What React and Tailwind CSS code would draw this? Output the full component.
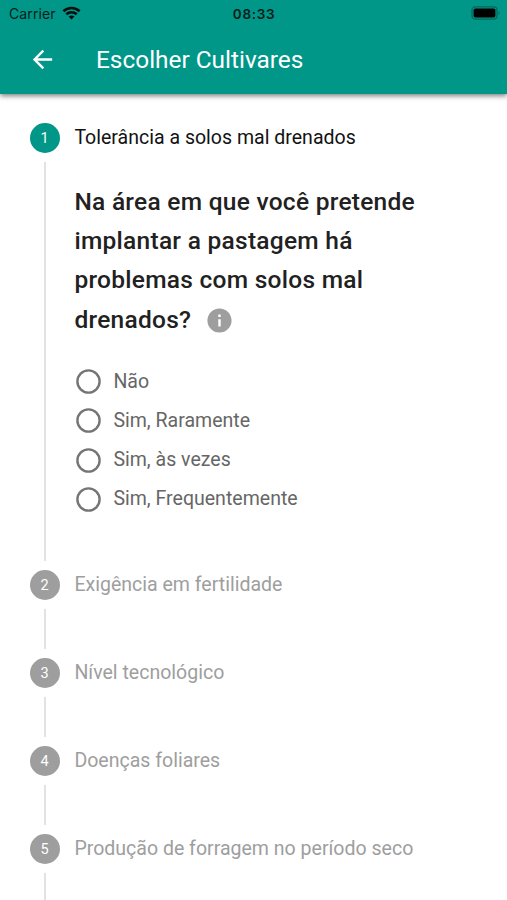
import React from "react";

const options = ["Não", "Sim, Raramente", "Sim, às vezes", "Sim, Frequentemente"];

const nextSteps = [
  "Exigência em fertilidade",
  "Nível tecnológico",
  "Doenças foliares",
  "Produção de forragem no período seco",
];

function StatusBar() {
  return (
    <div className="grid h-[27px] grid-cols-3 items-center font-[Inter,sans-serif] text-[13.5px] text-[#061c19]">
      <div className="flex items-center gap-[6px] pl-[9px] tracking-[0.1px]">
        <span className="text-[14px]">Carrier</span>
        <svg className="-mt-[2px]" width="19" height="14" viewBox="0 0 19 14" fill="none" stroke="#050f0e" strokeWidth="2.6">
          <path d="M1.4 5.2C6 .9 13 .9 17.6 5.2" />
          <path d="M4.3 8.3C7.3 5.6 11.7 5.6 14.7 8.3" />
          <path d="M9.5 13.6L6.6 10.6C8.2 9.2 10.8 9.2 12.4 10.6Z" fill="#050f0e" stroke="none" />
        </svg>
      </div>
      <div className="pt-px pl-px text-center font-semibold tracking-[0.65px]">08:33</div>
      <div className="-mt-px flex justify-end pr-[6px]">
        <svg width="30" height="14" viewBox="0 0 30 14">
          <rect x="1" y="0.9" width="25" height="12.2" rx="3.4" fill="none" stroke="#04665b" strokeWidth="1.3" />
          <rect x="2.6" y="2.5" width="21.8" height="9" rx="1.8" fill="#000" />
          <path d="M27.6 5.2C29 5.6 29 8.4 27.6 8.8Z" fill="#04665b" />
        </svg>
      </div>
    </div>
  );
}

function Step({ number, title, active, children }) {
  return (
    <li className="flex">
      <div className="flex w-[30px] shrink-0 flex-col items-center">
        <span
          className={`flex h-[29.5px] w-[29.5px] shrink-0 items-center justify-center rounded-full pt-[2px] pr-px text-[14.5px] text-white ${
            active ? "bg-[#009688]" : "bg-[#9e9e9e]"
          }`}
        >
          {number}
        </span>
        <span className="my-[9.5px] min-h-[39.5px] w-[1.5px] grow bg-[#e2e2e2]" />
      </div>
      <div className="ml-[14.4px] grow">
        <div
          className={`flex h-[29px] items-center text-[19.55px] whitespace-nowrap ${
            active ? "text-[#121212]" : "text-[#9e9e9e]"
          }`}
        >
          {title}
        </div>
        {children}
      </div>
    </li>
  );
}

export default function App() {
  return (
    <div className="h-[900px] w-[507px] overflow-hidden bg-white font-[Roboto,sans-serif]">
      <header className="relative h-[94px] bg-[#009688] shadow-[0_2px_5px_rgba(0,0,0,0.5)]">
        <StatusBar />
        <div className="flex h-[66px] items-center pl-[28px] text-white">
          <svg className="-mt-px" width="29" height="29" viewBox="0 0 24 24" fill="currentColor">
            <path d="M20 11H7.83l5.59-5.59L12 4l-8 8 8 8 1.41-1.41L7.83 13H20v-2z" />
          </svg>
          <h1 className="ml-[39px] text-[24.4px] whitespace-nowrap">Escolher Cultivares</h1>
        </div>
      </header>
      <main className="pt-[29px] pl-[30px]">
        <ol>
          <Step number={1} title="Tolerância a solos mal drenados" active>
            <div className="h-[418px]">
              <h2 className="w-[370px] pt-[30px] text-[24.5px] leading-[39.2px] font-medium tracking-[0.27px] text-[#212121]">
                Na área em que você pretende implantar a pastagem há problemas com solos mal{" "}
                <span className="inline-flex items-center">
                  drenados?
                  <svg className="mt-[3px] ml-[14px]" width="29" height="29" viewBox="0 0 24 24" fill="#9e9e9e">
                    <path d="M12 2C6.48 2 2 6.48 2 12s4.48 10 10 10 10-4.48 10-10S17.52 2 12 2zm1 15h-2v-6h2v6zm0-8h-2V7h2v2z" />
                  </svg>
                </span>
              </h2>
              <div className="mt-[23.5px]">
                {options.map((option) => (
                  <label key={option} className="flex h-[39.1px] items-center text-[19.55px] text-[#666]">
                    <svg className="ml-[2px]" width="25" height="25" viewBox="0 0 25 25">
                      <circle cx="12.5" cy="12.5" r="11.1" fill="none" stroke="#757575" strokeWidth="2.4" />
                    </svg>
                    <span className="ml-[12px]">{option}</span>
                  </label>
                ))}
              </div>
            </div>
          </Step>
          {nextSteps.map((title, i) => (
            <Step key={title} number={i + 2} title={title} />
          ))}
        </ol>
      </main>
    </div>
  );
}
